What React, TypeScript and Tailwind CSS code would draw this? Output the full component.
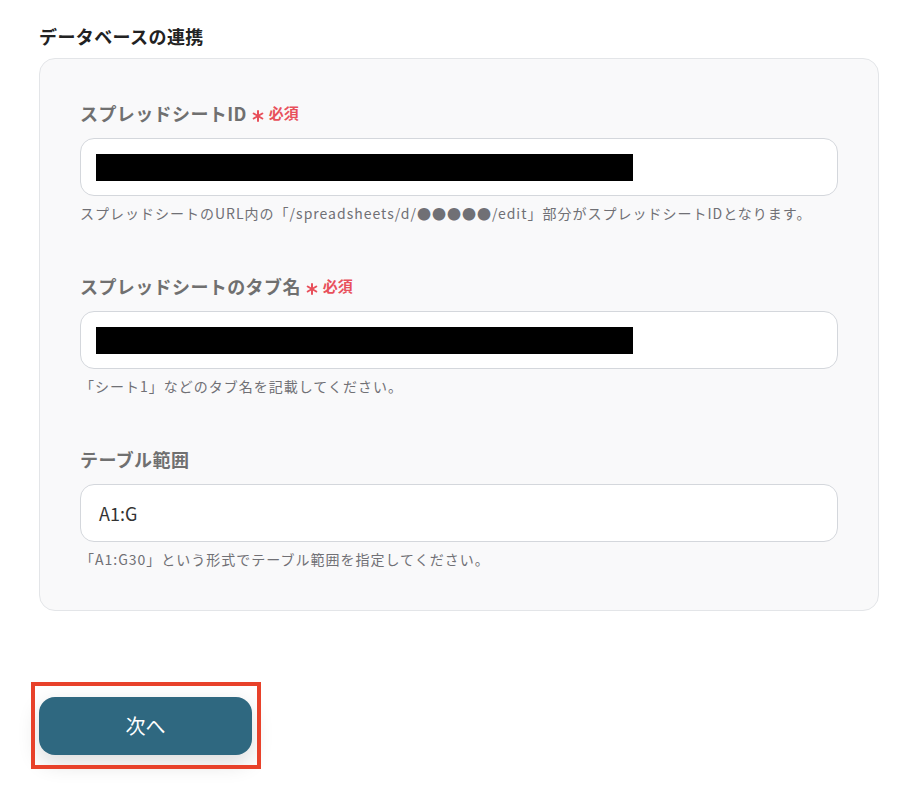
import React from "react";

const fields = [
  {
    label: "スプレッドシートID",
    required: true,
    masked: true,
    help: "スプレッドシートのURL内の「/spreadsheets/d/●●●●●/edit」部分がスプレッドシートIDとなります。",
  },
  {
    label: "スプレッドシートのタブ名",
    required: true,
    masked: true,
    help: "「シート1」などのタブ名を記載してください。",
  },
  {
    label: "テーブル範囲",
    required: false,
    value: "A1:G",
    help: "「A1:G30」という形式でテーブル範囲を指定してください。",
  },
];

function RequiredMark() {
  return (
    <span className="ml-[5px] flex items-center gap-[5px] text-[#e8505b]">
      <svg width="12" height="12" viewBox="0 0 12 12" className="mt-[5px]">
        <g stroke="#e8505b" strokeWidth="2" strokeLinecap="round">
          <line x1="6" y1="1" x2="6" y2="11" />
          <line x1="1.7" y1="3.5" x2="10.3" y2="8.5" />
          <line x1="1.7" y1="8.5" x2="10.3" y2="3.5" />
        </g>
      </svg>
      <span className="text-[15px] font-bold leading-[20px]">必須</span>
    </span>
  );
}

export default function App() {
  return (
    <div
      className="min-h-screen w-full bg-white px-[39px] pt-[24px]"
      style={{ fontFamily: '"Noto Sans CJK JP", "Noto Sans", sans-serif' }}
    >
      <h2 className="text-[18px] font-bold leading-[24px] tracking-[0.4px] text-[#222222]">データベースの連携</h2>

      {/* Card */}
      <div className="mt-[10px] w-[840px] rounded-[16px] border border-[#e3e5e8] bg-[#f9f9fa] px-[40px] pt-[41px] pb-[41px]">
        <div className="flex flex-col gap-[50px]">
          {fields.map((f) => (
            <div key={f.label} className="flex flex-col">
              <div className="flex items-center">
                <span className="text-[18px] font-bold leading-[26px] tracking-[0.4px] text-[#707070]">{f.label}</span>
                {f.required && <RequiredMark />}
              </div>
              <div className="mt-[12px] flex h-[58px] items-center rounded-[14px] border border-[#d4d7dc] bg-white px-[15px]">
                {f.masked ? (
                  <div className="h-[27px] w-[537px] bg-black" />
                ) : (
                  <span className="pl-[3px] text-[18px] text-[#333333]">{f.value}</span>
                )}
              </div>
              <p className="mt-[7px] text-[14px] leading-[20px] tracking-[1px] text-[#707075]">{f.help}</p>
            </div>
          ))}
        </div>
      </div>

      {/* Next button with highlight frame */}
      <div className="relative mt-[86px] w-[213px]">
        <button className="flex h-[58px] w-[213px] items-center justify-center rounded-[16px] bg-[#2f6880] text-[20px] text-white shadow-[0_8px_22px_rgba(0,0,0,0.14)]">
          次へ
        </button>
        <div className="pointer-events-none absolute left-[-8px] right-[-9px] top-[-15px] bottom-[-14px] border-[4px] border-[#e8412a]" />
      </div>
    </div>
  );
}
